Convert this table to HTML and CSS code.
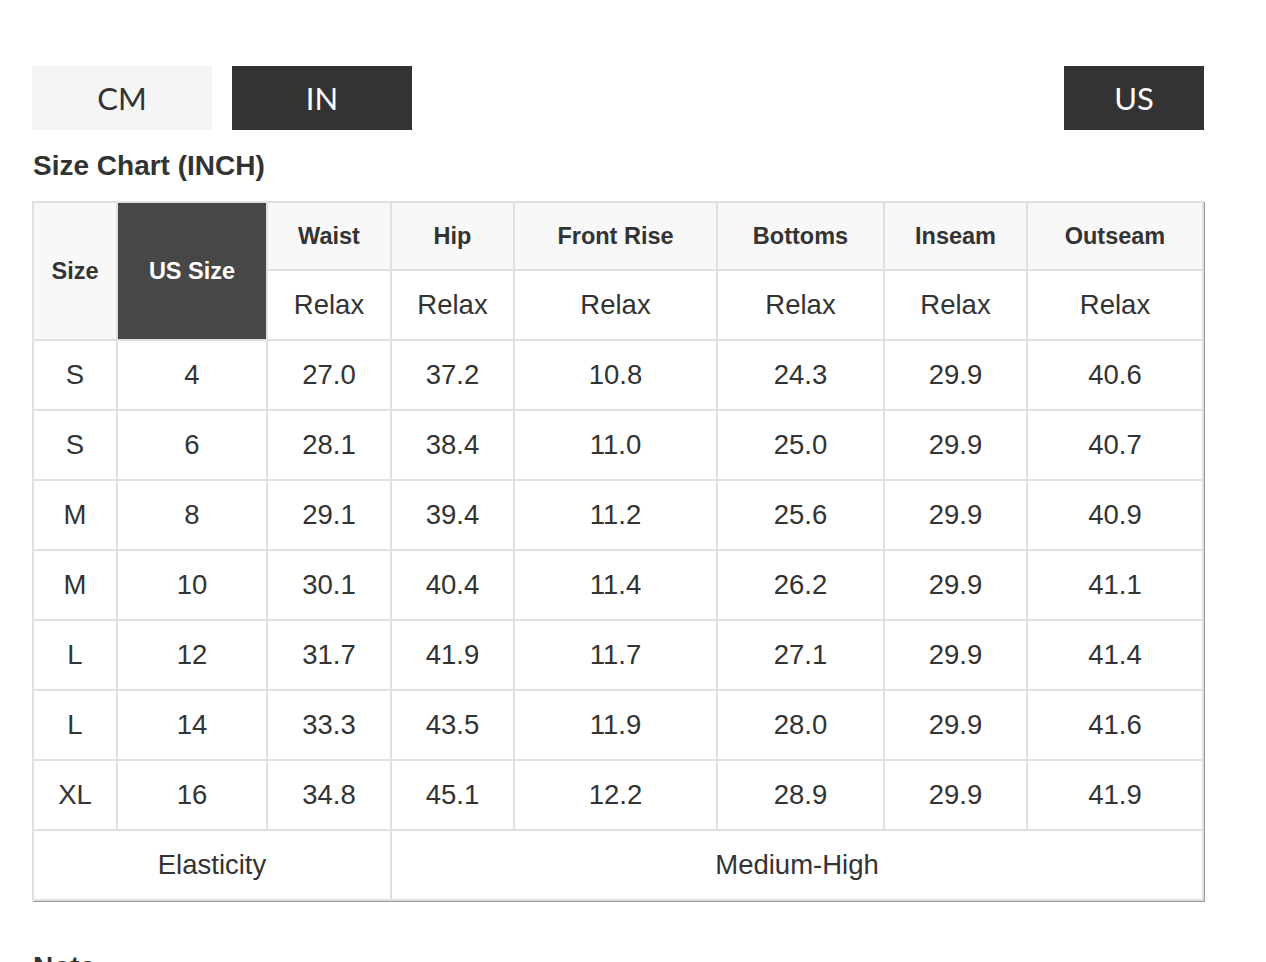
FILE: index.html
```html
<!DOCTYPE html>
<html>
<head>
<meta charset="utf-8">
<link rel="stylesheet" href="styles.css">
</head>
<body>
<div class="page">
  <div class="toolbar">
    <div class="units">
      <div class="btn btn-light">CM</div>
      <div class="btn btn-dark">IN</div>
    </div>
    <div class="btn btn-dark btn-us">US</div>
  </div>
  <h2 class="title">Size Chart (INCH)</h2>
  <table class="chart">
    <colgroup>
      <col style="width:84px"><col style="width:150px"><col style="width:124px"><col style="width:123px"><col style="width:203px"><col style="width:167px"><col style="width:143px"><col style="width:176px">
    </colgroup>
    <thead>
      <tr class="first">
        <th rowspan="2" class="hd">Size</th>
        <th rowspan="2" class="hd-dark">US Size</th>
        <th class="hd">Waist</th>
        <th class="hd">Hip</th>
        <th class="hd">Front Rise</th>
        <th class="hd">Bottoms</th>
        <th class="hd">Inseam</th>
        <th class="hd">Outseam</th>
      </tr>
      <tr>
        <td>Relax</td><td>Relax</td><td>Relax</td><td>Relax</td><td>Relax</td><td>Relax</td>
      </tr>
    </thead>
    <tbody>
      <tr><td>S</td><td>4</td><td>27.0</td><td>37.2</td><td>10.8</td><td>24.3</td><td>29.9</td><td>40.6</td></tr>
      <tr><td>S</td><td>6</td><td>28.1</td><td>38.4</td><td>11.0</td><td>25.0</td><td>29.9</td><td>40.7</td></tr>
      <tr><td>M</td><td>8</td><td>29.1</td><td>39.4</td><td>11.2</td><td>25.6</td><td>29.9</td><td>40.9</td></tr>
      <tr><td>M</td><td>10</td><td>30.1</td><td>40.4</td><td>11.4</td><td>26.2</td><td>29.9</td><td>41.1</td></tr>
      <tr><td>L</td><td>12</td><td>31.7</td><td>41.9</td><td>11.7</td><td>27.1</td><td>29.9</td><td>41.4</td></tr>
      <tr><td>L</td><td>14</td><td>33.3</td><td>43.5</td><td>11.9</td><td>28.0</td><td>29.9</td><td>41.6</td></tr>
      <tr><td>XL</td><td>16</td><td>34.8</td><td>45.1</td><td>12.2</td><td>28.9</td><td>29.9</td><td>41.9</td></tr>
      <tr><td colspan="3">Elasticity</td><td colspan="5">Medium-High</td></tr>
    </tbody>
  </table>
  <h3 class="note">Note:</h3>
</div>
</body>
</html>
```

FILE: styles.css
```css
html, body {
  margin: 0;
  padding: 0;
  background: #fff;
}
.page {
  width: 1172px;
  padding: 66px 0 0 32px;
  font-family: "Liberation Sans", Arial, sans-serif;
  color: #333;
}
.toolbar {
  display: flex;
  justify-content: space-between;
  align-items: center;
}
.units {
  display: flex;
  gap: 20px;
}
.btn {
  width: 180px;
  height: 64px;
  display: flex;
  align-items: center;
  justify-content: center;
  font-family: "Lato", "Noto Sans", sans-serif;
  font-size: 31px;
}
.btn-light {
  background: #f5f5f5;
  color: #333;
}
.btn-dark {
  background: #333;
  color: #fff;
}
.btn-us {
  width: 140px;
}
.title {
  margin: 19px 0 18px 1px;
  font-size: 28px;
  line-height: 34px;
  font-weight: bold;
  color: #333;
}
.chart {
  width: 1170px;
  margin-left: 0;
  border-collapse: collapse;
  table-layout: fixed;
  box-shadow: 1px 1px 0 #999;
}
.chart tr {
  height: 70px;
}
.chart tr.first {
  height: 68px;
}
.chart td, .chart th {
  border: 2px solid #e0e0e0;
  padding: 0;
  text-align: center;
  vertical-align: middle;
  font-size: 27.5px;
  font-weight: normal;
  color: #333;
}
.chart th.hd {
  background: #f8f8f8;
  font-size: 23.5px;
  font-weight: bold;
}
.chart th.hd-dark {
  background: #474747;
  color: #fff;
  font-size: 23.5px;
  font-weight: bold;
}
.note {
  margin: 50px 0 0 1px;
  font-size: 28px;
  font-weight: bold;
  color: #333;
}
```
